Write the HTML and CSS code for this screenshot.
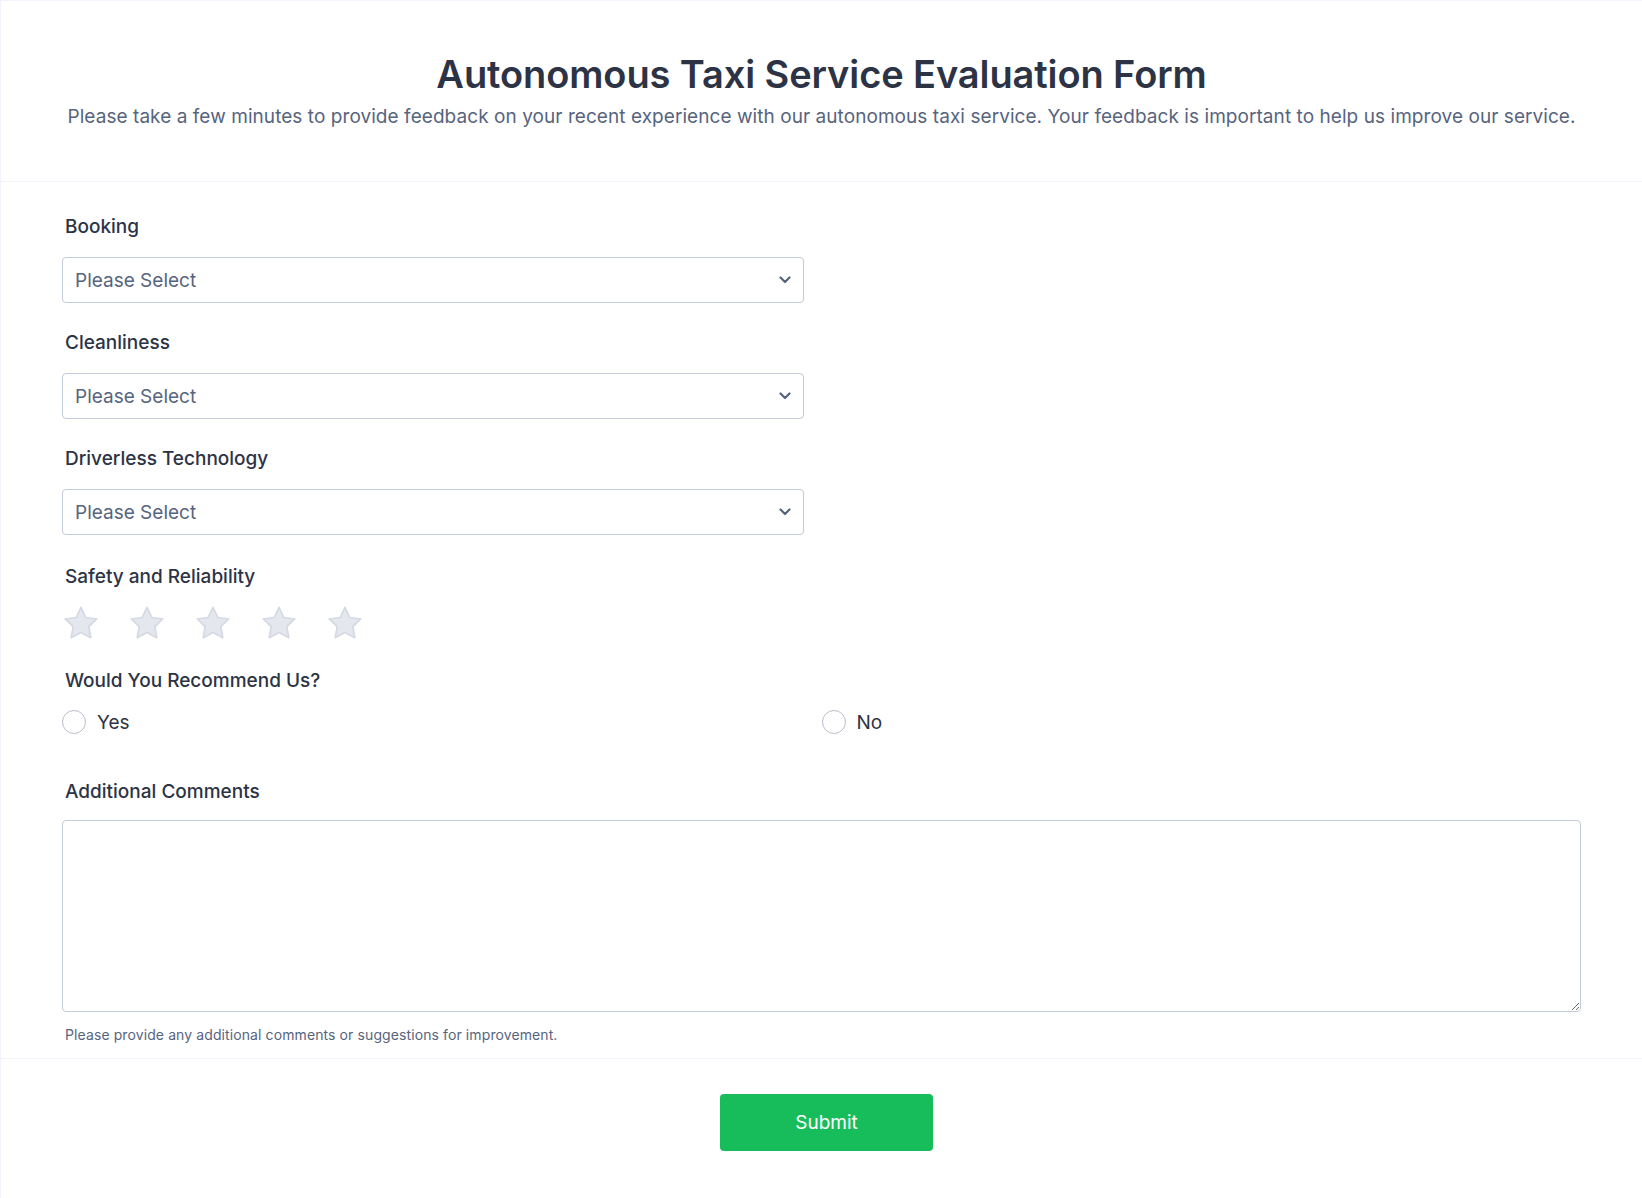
FILE: index.html
```html
<!DOCTYPE html>
<html lang="en">
<head>
<meta charset="utf-8">
<title>Autonomous Taxi Service Evaluation Form</title>
<link rel="stylesheet" href="styles.css">
</head>
<body>
<form class="card">
  <header class="head">
    <h1 class="title">Autonomous Taxi Service Evaluation Form</h1>
    <p class="subtitle">Please take a few minutes to provide feedback on your recent experience with our autonomous taxi service. Your feedback is important to help us improve our service.</p>
  </header>

  <section class="body">
    <div class="field">
      <label class="label">Booking</label>
      <div class="select"><span>Please Select</span><svg class="chev" width="12" height="8" viewBox="0 0 12 8"><path d="M1.5 1.5 6 6l4.5-4.5" fill="none" stroke="#57647e" stroke-width="2.2" stroke-linecap="round" stroke-linejoin="round"/></svg></div>
    </div>
    <div class="field">
      <label class="label">Cleanliness</label>
      <div class="select"><span>Please Select</span><svg class="chev" width="12" height="8" viewBox="0 0 12 8"><path d="M1.5 1.5 6 6l4.5-4.5" fill="none" stroke="#57647e" stroke-width="2.2" stroke-linecap="round" stroke-linejoin="round"/></svg></div>
    </div>
    <div class="field field-last-select">
      <label class="label">Driverless Technology</label>
      <div class="select"><span>Please Select</span><svg class="chev" width="12" height="8" viewBox="0 0 12 8"><path d="M1.5 1.5 6 6l4.5-4.5" fill="none" stroke="#57647e" stroke-width="2.2" stroke-linecap="round" stroke-linejoin="round"/></svg></div>
    </div>
    <div class="field field-stars">
      <label class="label">Safety and Reliability</label>
      <div class="stars">
        <svg class="star" width="38" height="36" viewBox="0 0 36 34"><path d="M18 2.2l4.6 9.6 10.4 1.4-7.6 7.3 1.9 10.4L18 25.9l-9.3 5 1.9-10.4L3 13.2l10.4-1.4z" fill="#e4e7ed" stroke="#d5d9e2" stroke-width="1.6" stroke-linejoin="round"/></svg>
        <svg class="star" width="38" height="36" viewBox="0 0 36 34"><path d="M18 2.2l4.6 9.6 10.4 1.4-7.6 7.3 1.9 10.4L18 25.9l-9.3 5 1.9-10.4L3 13.2l10.4-1.4z" fill="#e4e7ed" stroke="#d5d9e2" stroke-width="1.6" stroke-linejoin="round"/></svg>
        <svg class="star" width="38" height="36" viewBox="0 0 36 34"><path d="M18 2.2l4.6 9.6 10.4 1.4-7.6 7.3 1.9 10.4L18 25.9l-9.3 5 1.9-10.4L3 13.2l10.4-1.4z" fill="#e4e7ed" stroke="#d5d9e2" stroke-width="1.6" stroke-linejoin="round"/></svg>
        <svg class="star" width="38" height="36" viewBox="0 0 36 34"><path d="M18 2.2l4.6 9.6 10.4 1.4-7.6 7.3 1.9 10.4L18 25.9l-9.3 5 1.9-10.4L3 13.2l10.4-1.4z" fill="#e4e7ed" stroke="#d5d9e2" stroke-width="1.6" stroke-linejoin="round"/></svg>
        <svg class="star" width="38" height="36" viewBox="0 0 36 34"><path d="M18 2.2l4.6 9.6 10.4 1.4-7.6 7.3 1.9 10.4L18 25.9l-9.3 5 1.9-10.4L3 13.2l10.4-1.4z" fill="#e4e7ed" stroke="#d5d9e2" stroke-width="1.6" stroke-linejoin="round"/></svg>
      </div>
    </div>
    <div class="field field-radio">
      <label class="label">Would You Recommend Us?</label>
      <div class="radios">
        <div class="radio"><span class="circle"></span><span>Yes</span></div>
        <div class="radio"><span class="circle"></span><span>No</span></div>
      </div>
    </div>
    <div class="field field-text">
      <label class="label">Additional Comments</label>
      <textarea class="textarea"></textarea>
      <p class="help">Please provide any additional comments or suggestions for improvement.</p>
    </div>
  </section>

  <footer class="foot">
    <button type="button" class="submit">Submit</button>
  </footer>
</form>
</body>
</html>
```

FILE: styles.css
```css
* { box-sizing: border-box; }

html, body {
  margin: 0;
  padding: 0;
  background: #ffffff;
}

body {
  font-family: Inter, "Noto Sans", "Liberation Sans", sans-serif;
  color: #2c3345;
}

.card {
  border-top: 1px solid #f3f3fe;
  border-left: 1px solid #f3f3fe;
  min-height: 1198px;
}

.head {
  padding: 50px 20px 51px;
  text-align: center;
  border-bottom: 1px solid #f3f3fe;
}

.title {
  margin: 0;
  font-size: 38px;
  line-height: 46px;
  font-weight: 600;
  color: #2c3345;
  letter-spacing: -0.1px;
}

.subtitle {
  margin: 7px 0 0;
  font-size: 19px;
  line-height: 26px;
  color: #57647e;
  letter-spacing: 0.06px;
}

.body {
  padding: 33px 61px 0 61px;
  border-bottom: 1px solid #f3f3fe;
}

.field {
  display: flex;
  flex-direction: column;
  margin-bottom: 28px;
}

.field-last-select { margin-bottom: 30px; }

.label {
  display: block;
  font-size: 19px;
  line-height: 24px;
  font-weight: 500;
  color: #2c3345;
  padding-left: 3px;
  margin-bottom: 18px;
}

.select {
  width: 742px;
  height: 46px;
  border: 1px solid #c3cad8;
  border-radius: 4px;
  display: flex;
  align-items: center;
  justify-content: space-between;
  padding: 0 12px 0 12px;
  font-size: 19px;
  color: #57647e;
  background: #fff;
}

.chev { display: block; }

.field-stars { margin-bottom: 27px; }

.field-stars .label { margin-bottom: 15px; }

.stars {
  display: flex;
  gap: 28px;
  height: 38px;
  align-items: center;
}

.star { display: block; }

.field-radio { margin-bottom: 46px; }

.field-radio .label { margin-bottom: 17px; }

.radios {
  display: grid;
  grid-template-columns: 1fr 1fr;
}

.radio {
  display: flex;
  align-items: center;
  gap: 11px;
  height: 24px;
  font-size: 19px;
  color: #2c3345;
}

.circle {
  width: 24px;
  height: 24px;
  border: 1px solid #b8bdc9;
  border-radius: 50%;
  background: #fff;
  flex: none;
}

.field-text { margin-bottom: 0; }

.field-text .label { margin-bottom: 16px; }

.textarea {
  display: block;
  width: 100%;
  height: 192px;
  border: 1px solid #c3cad8;
  border-radius: 4px;
  font-family: inherit;
  font-size: 16px;
  margin: 0;
}

.help {
  margin: 13px 0 0;
  padding: 0 0 13px 3px;
  font-size: 14px;
  line-height: 20px;
  letter-spacing: 0.1px;
  color: #57647e;
}

.foot {
  display: flex;
  justify-content: center;
  padding-top: 35px;
}

.submit {
  width: 213px;
  height: 57px;
  border: none;
  border-radius: 4px;
  background: #18bd5b;
  color: #ffffff;
  font-family: Inter, "Noto Sans", "Liberation Sans", sans-serif;
  font-size: 19px;
  font-weight: 400;
  margin-left: 10px;
}
```
